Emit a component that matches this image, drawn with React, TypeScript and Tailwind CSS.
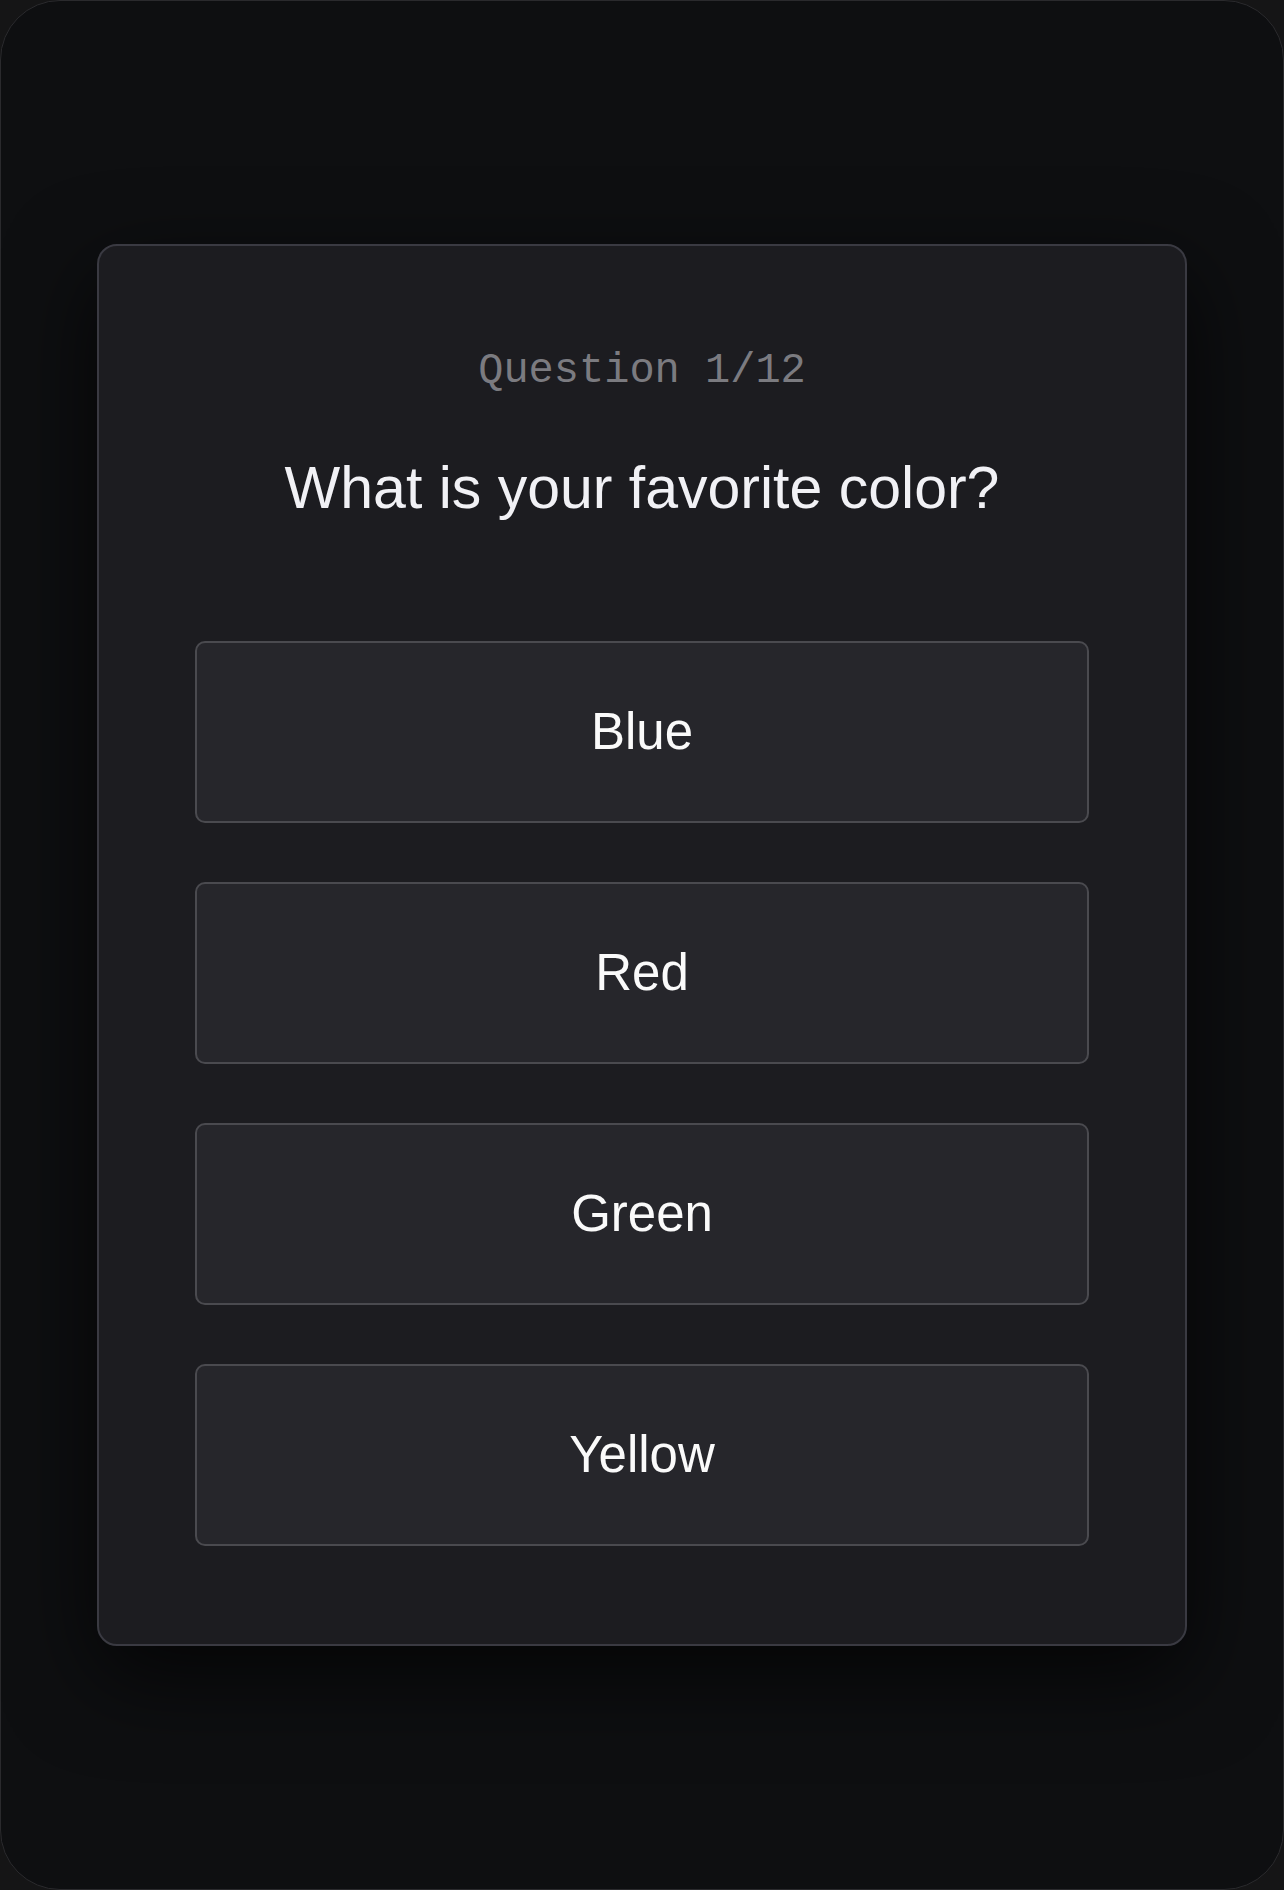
import React from 'react';

export default function App() {
  const options = ['Blue', 'Red', 'Green', 'Yellow'];

  return (
    <div className="w-[1284px] h-[1890px] bg-[#151516]">
      <div className="w-full h-full rounded-[60px] border border-[#2a2a2d] bg-[#0e0f11] flex items-center justify-center px-[96px]">
        <div className="w-full rounded-[20px] border-2 border-[#3a3a42] bg-[#1c1c20] shadow-[0_30px_90px_rgba(0,0,0,0.7)] px-[96px] pt-[100px] pb-[98px] flex flex-col items-center">
          <p className="text-[42px] leading-[50px] text-[#7b7b80]" style={{ fontFamily: '"Liberation Mono", monospace' }}>
            Question 1/12
          </p>
          <h1 className="mt-[57px] text-[59px] leading-[70px] text-[#f1f1f5]" style={{ fontFamily: '"Liberation Sans", Arial, sans-serif' }}>
            What is your favorite color?
          </h1>
          <div className="mt-[118px] w-full flex flex-col gap-[59px]">
            {options.map(o => (
              <button
                key={o}
                className="h-[182px] w-full rounded-[10px] border-2 border-[#4a4a4f] bg-[#26262b] text-[51px] text-[#fafafa]"
                style={{ fontFamily: '"Liberation Sans", Arial, sans-serif' }}
              >
                {o}
              </button>
            ))}
          </div>
        </div>
      </div>
    </div>
  );
}
